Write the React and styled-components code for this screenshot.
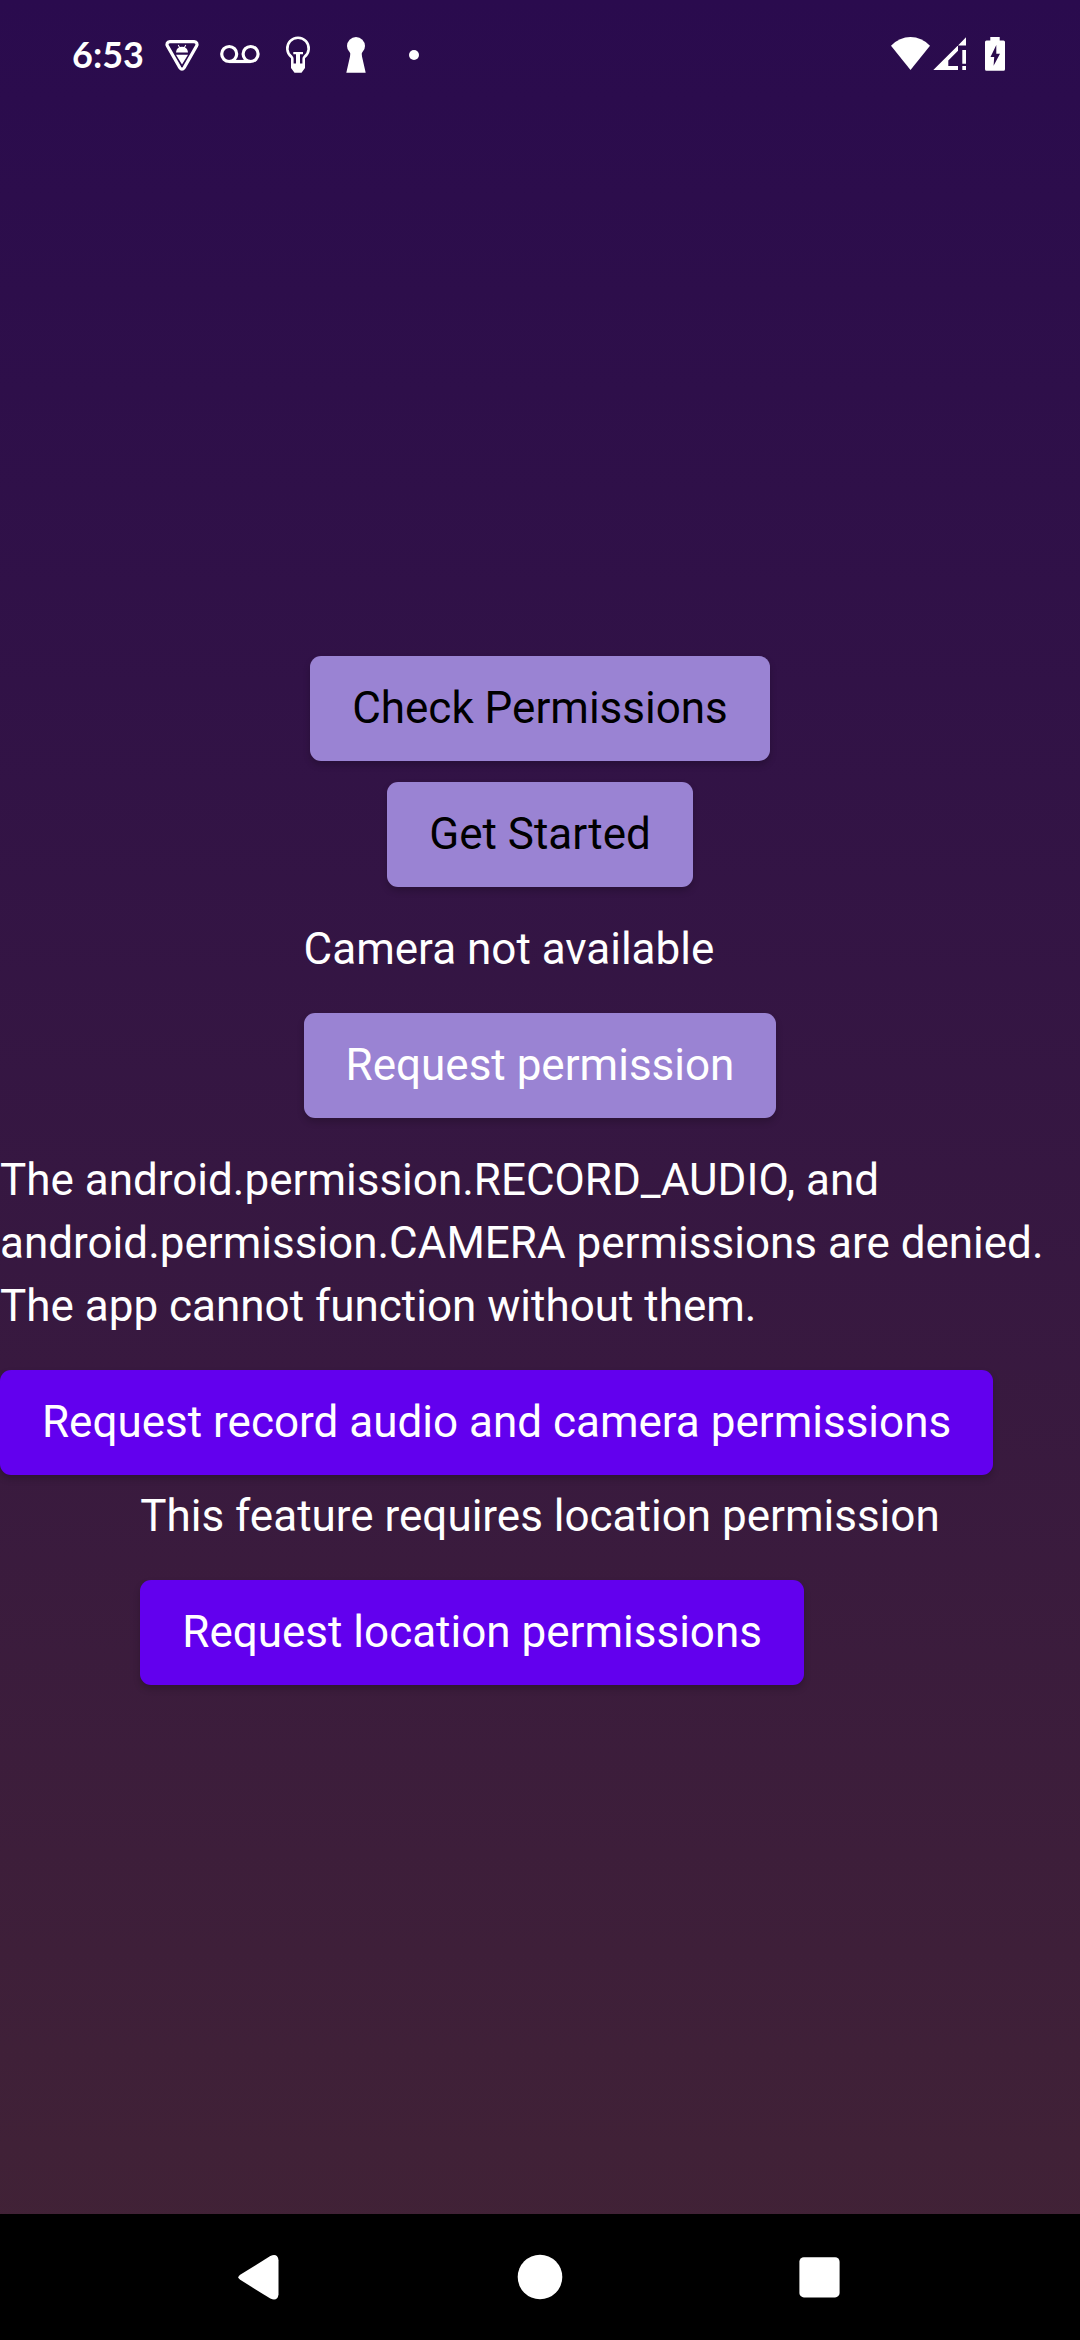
import React from "react";
import styled, { createGlobalStyle } from "styled-components";

const GlobalStyle = createGlobalStyle`
  *, *::before, *::after { box-sizing: border-box; }
  body { margin: 0; background: #000; }
`;

const Screen = styled.div`
  min-height: 100vh;
  display: flex;
  flex-direction: column;
  background: linear-gradient(#2a0b4e, #422335);
  color: #fff;
  font-family: Roboto, "Noto Sans", sans-serif;
  font-size: 44px;
  line-height: 63px;
`;

const StatusBar = styled.header`
  height: 126px;
  padding: 0 64px 18px 72px;
  display: flex;
  align-items: center;
  justify-content: space-between;
`;

const StatusGroup = styled.div`
  display: flex;
  align-items: center;
  gap: ${(p) => p.$gap || 0}px;
`;

const Clock = styled.time`
  min-width: 76px;
  font-family: Lato, Roboto, sans-serif;
  font-size: 36px;
  font-weight: 700;
  line-height: 48px;
`;

const Glyph = styled.svg`
  display: block;
  flex: none;
  width: ${(p) => p.$size}px;
  height: ${(p) => p.$size}px;
  fill: #fff;
`;

const Main = styled.main`
  flex: 1;
  display: flex;
  flex-direction: column;
  align-items: center;
  justify-content: center;
`;

const Actions = styled.div`
  display: flex;
  flex-direction: column;
  align-items: center;
  gap: 21px;
`;

const PermissionBlock = styled.section`
  display: flex;
  flex-direction: column;
  align-items: flex-start;
  gap: 32px;
  margin-top: ${(p) => (p.$tight ? 10 : 31)}px;
  width: ${(p) => (p.$wide ? "100%" : "auto")};
`;

const Message = styled.p`
  margin: 0;
`;

const Button = styled.button`
  padding: 21px 42px;
  border: 0;
  border-radius: 11px;
  background: ${(p) => (p.$soft ? "#9a83d3" : "#6200ee")};
  color: ${(p) => (p.$dark ? "#000" : "#fff")};
  font: inherit;
  box-shadow: 0 4px 7px rgba(0, 0, 0, 0.2);
  cursor: pointer;
`;

const NavBar = styled.nav`
  height: 126px;
  padding: 0 120px;
  display: flex;
  background: #000;
`;

const NavButton = styled.button`
  flex: 1;
  display: flex;
  align-items: center;
  justify-content: center;
  padding: 0;
  border: 0;
  background: none;
  cursor: pointer;
`;

function DebugIcon() {
  return (
    <Glyph $size={48} viewBox="0 0 48 48" aria-hidden="true">
      <path
        d="M12 11.7h24q4.4.6 2.4 4.6L26.2 37.6q-2.2 3.2-4.4 0L9.6 16.3q-2-4 2.4-4.6z"
        fill="none"
        stroke="#fff"
        strokeWidth="3.2"
      />
      <path d="M18 22.4q.4-4 3-5l-1.2-2.2.8-.4 1.3 2.3q2.1-.6 4.2 0l1.3-2.3.8.4-1.2 2.2q2.6 1 3 5zM18 24.8h12L24 34.4z" />
    </Glyph>
  );
}

function VoicemailIcon() {
  return (
    <Glyph $size={48} viewBox="0 0 48 48" aria-hidden="true">
      <g fill="none" stroke="#fff" strokeWidth="3.2">
        <circle cx="13.2" cy="24" r="7.5" />
        <circle cx="34.6" cy="24" r="7.5" />
        <path d="M13.2 31.5h21.4" />
      </g>
    </Glyph>
  );
}

function BulbIcon() {
  return (
    <Glyph $size={48} viewBox="0 0 48 48" aria-hidden="true">
      <path
        d="M18.3 34v-5.3q0-1-.8-1.8A10.7 10.7 0 1 1 30.5 26.9q-.8.8-.8 1.8V34"
        fill="none"
        stroke="#fff"
        strokeWidth="2.6"
      />
      <path d="M17 33.5h14V38l-3.5 4.7h-7L17 38zM19.3 22H29v2.2h-3v10h-4v-10h-2.7z" />
    </Glyph>
  );
}

function KeyholeIcon() {
  return (
    <Glyph $size={48} viewBox="0 0 48 48" aria-hidden="true">
      <circle cx="24" cy="16" r="9" />
      <path d="M18 21.5h12q-.5 2.5 0 5l3.7 16.2H14.3L18 26.5q.5-2.5 0-5z" />
    </Glyph>
  );
}

function DotIcon() {
  return (
    <Glyph $size={48} viewBox="0 0 48 48" aria-hidden="true">
      <circle cx="24" cy="25" r="5" />
    </Glyph>
  );
}

function WifiIcon() {
  return (
    <Glyph $size={42} viewBox="0 0 42 42" aria-hidden="true">
      <path d="M20.5 37L1 12.7Q9.5 4 20.5 4T40 12.7z" />
    </Glyph>
  );
}

function SignalIcon() {
  return (
    <Glyph $size={42} viewBox="0 0 42 42" aria-hidden="true">
      <path d="M34 4.3v8.2h-8zM1.3 37L25.4 12.9h.6v4.9l-9.7 9.7V33H26v4zM30.3 17H34v13.7h-3.7zM30.3 33H34v4h-3.7z" />
    </Glyph>
  );
}

function BatteryIcon() {
  return (
    <Glyph $size={42} viewBox="0 0 42 42" aria-hidden="true">
      <path
        fillRule="evenodd"
        d="M16.3 4h9.4v3.6h3.8q1.5 0 1.5 1.5v27.2q0 1.5-1.500 1.500h-17q-1.500 0-1.500-1.500V9.100q0-1.500 1.500-1.500h3.800zM22.300 12l-5.800 12h3.700l-.6 8.700L26 20.700h-3.700z"
      />
    </Glyph>
  );
}

function BackIcon() {
  return (
    <Glyph $size={48} viewBox="0 0 48 48" aria-hidden="true">
      <path d="M4.2 21.8L34.3 3Q41.6 0 42.5 7.200V41.400Q41.600 48.600 34.300 45.600L4.200 26.800Q.5 24.300 4.200 21.800z" />
    </Glyph>
  );
}

function HomeIcon() {
  return (
    <Glyph $size={48} viewBox="0 0 48 48" aria-hidden="true">
      <circle cx="24" cy="24" r="22.3" />
    </Glyph>
  );
}

function RecentsIcon() {
  return (
    <Glyph $size={48} viewBox="0 0 48 48" aria-hidden="true">
      <rect x="3.4" y="4.2" width="40.2" height="40.2" rx="4.5" />
    </Glyph>
  );
}

export default function App() {
  return (
    <>
      <GlobalStyle />
      <Screen>
        <StatusBar>
          <StatusGroup $gap={10}>
            <Clock>6:53</Clock>
            <DebugIcon />
            <VoicemailIcon />
            <BulbIcon />
            <KeyholeIcon />
            <DotIcon />
          </StatusGroup>
          <StatusGroup>
            <WifiIcon />
            <SignalIcon />
            <BatteryIcon />
          </StatusGroup>
        </StatusBar>

        <Main>
          <Actions>
            <Button type="button" $soft $dark>Check Permissions</Button>
            <Button type="button" $soft $dark>Get Started</Button>
          </Actions>

          <PermissionBlock>
            <Message>Camera not available</Message>
            <Button type="button" $soft>Request permission</Button>
          </PermissionBlock>

          <PermissionBlock $wide>
            <Message>
              The android.permission.RECORD_AUDIO, and
              android.permission.CAMERA permissions are denied. The app cannot
              function without them.
            </Message>
            <Button type="button">Request record audio and camera permissions</Button>
          </PermissionBlock>

          <PermissionBlock $tight>
            <Message>This feature requires location permission</Message>
            <Button type="button">Request location permissions</Button>
          </PermissionBlock>
        </Main>

        <NavBar aria-label="System navigation">
          <NavButton type="button" aria-label="Back">
            <BackIcon />
          </NavButton>
          <NavButton type="button" aria-label="Home">
            <HomeIcon />
          </NavButton>
          <NavButton type="button" aria-label="Recent apps">
            <RecentsIcon />
          </NavButton>
        </NavBar>
      </Screen>
    </>
  );
}
